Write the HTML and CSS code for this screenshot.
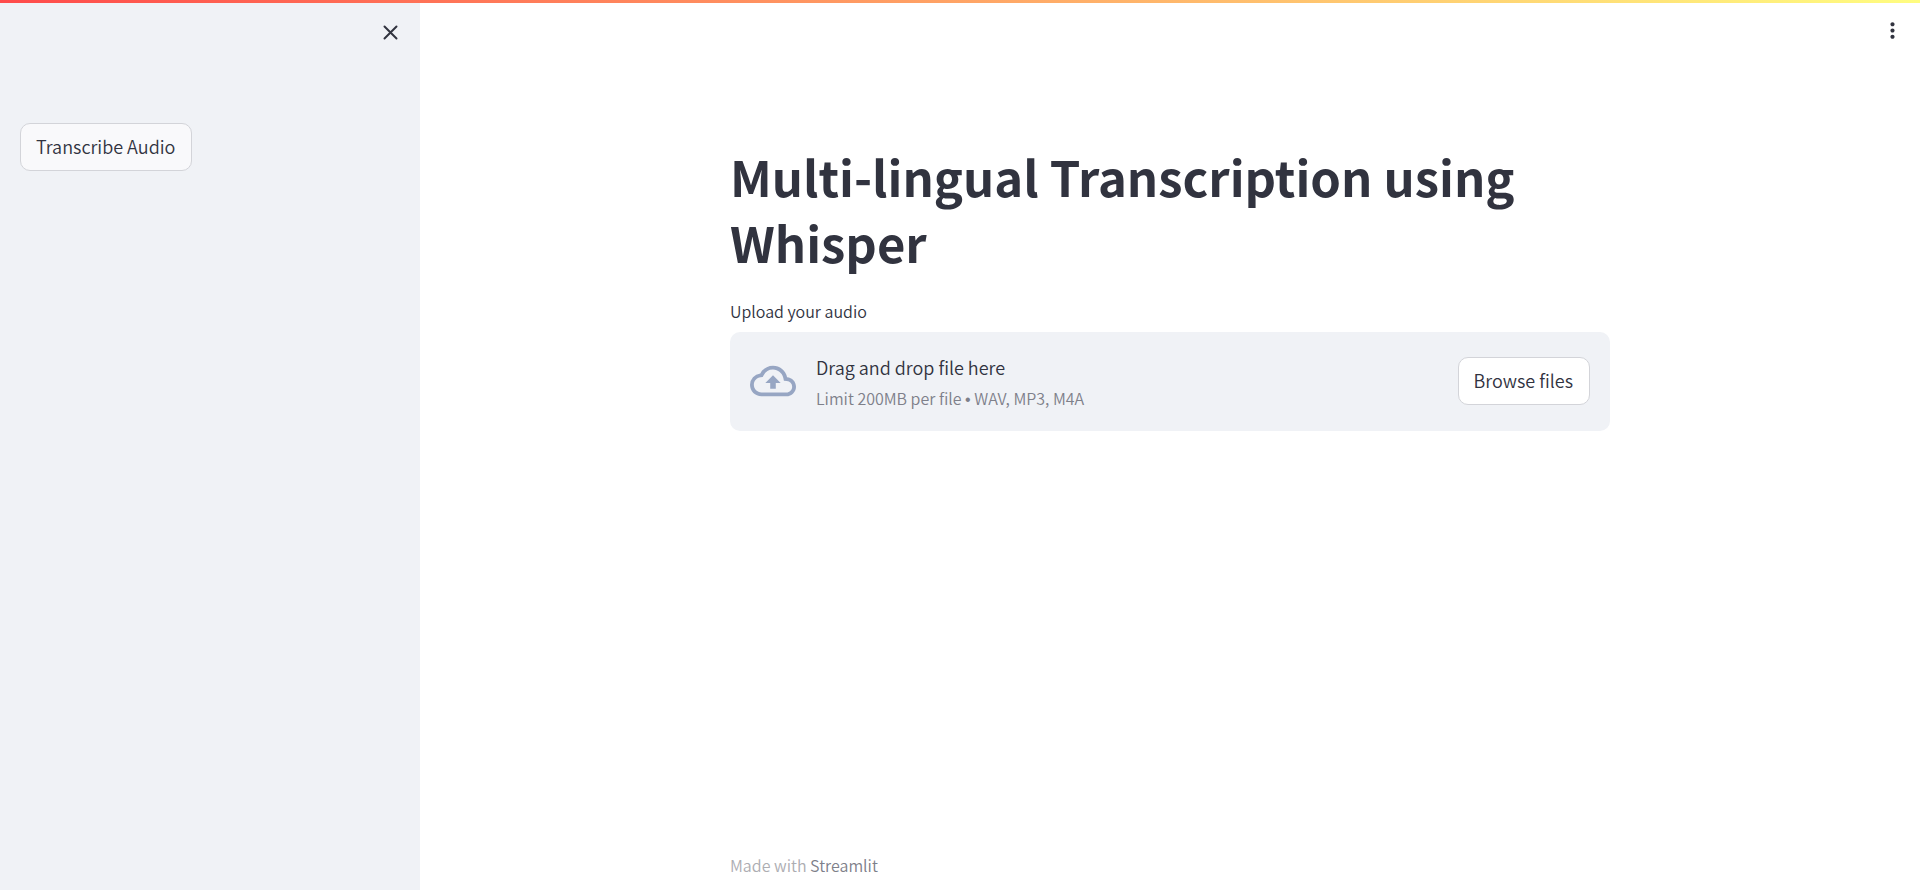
FILE: index.html
```html
<!DOCTYPE html>
<html lang="en">
<head>
<meta charset="utf-8">
<meta name="viewport" content="width=device-width, initial-scale=1">
<title>Multi-lingual Transcription using Whisper</title>
<link rel="stylesheet" href="styles.css">
</head>
<body>
<div class="decoration"></div>
<div class="app">
  <aside class="sidebar">
    <div class="sidebar-header">
      <button class="icon-button" type="button" aria-label="Close sidebar">
        <svg class="close-icon" viewBox="0 0 15 15" aria-hidden="true"><path d="M1.500 1.500L13.500 13.500M13.500 1.500L1.500 13.500" fill="none" stroke="currentColor" stroke-width="2" stroke-linecap="round"/></svg>
      </button>
    </div>
    <div class="sidebar-content">
      <button class="button button-sidebar" type="button">Transcribe Audio</button>
    </div>
  </aside>
  <div class="view">
    <header class="toolbar">
      <button class="icon-button" type="button" aria-label="Main menu">
        <svg class="menu-icon" viewBox="0 0 24 24" aria-hidden="true"><path fill="currentColor" d="M12 8c1.100 0 2-.9 2-2s-.9-2-2-2-2 .9-2 2 .9 2 2 2zm0 2c-1.100 0-2 .9-2 2s.9 2 2 2 2-.9 2-2-.9-2-2-2zm0 6c-1.100 0-2 .9-2 2s.9 2 2 2 2-.9 2-2-.9-2-2-2z"/></svg>
      </button>
    </header>
    <main class="content">
      <h1 class="title">Multi-lingual Transcription using Whisper</h1>
      <div class="uploader">
        <label class="uploader-label" for="audio-file">Upload your audio</label>
        <input id="audio-file" type="file" accept=".wav,.mp3,.m4a" hidden>
        <section class="dropzone">
          <svg class="cloud-icon" viewBox="0 0 24 24" aria-hidden="true"><path fill="currentColor" d="M19.350 10.040A7.490 7.490 0 0 0 12 4C9.110 4 6.600 5.640 5.350 8.040A5.994 5.994 0 0 0 0 14c0 3.310 2.690 6 6 6h13c2.760 0 5-2.240 5-5 0-2.640-2.050-4.780-4.650-4.960zM19 18H6c-2.210 0-4-1.790-4-4 0-2.050 1.530-3.760 3.560-3.970l1.070-.11.500-.95A5.469 5.469 0 0 1 12 6c2.620 0 4.880 1.860 5.390 4.430l.300 1.500 1.530.110A2.980 2.980 0 0 1 22 15c0 1.650-1.350 3-3 3zM8 13h2.550v3h2.900v-3H16l-4-4z"/></svg>
          <div class="instructions">
            <span class="instruction">Drag and drop file here</span>
            <span class="limit">Limit 200MB per file <span class="bullet">•</span> WAV, MP3, M4A</span>
          </div>
          <button class="button" type="button">Browse files</button>
        </section>
      </div>
    </main>
    <footer class="footer">Made with <a class="footer-link" href="#">Streamlit</a></footer>
  </div>
</div>
</body>
</html>
```
FILE: styles.css
```css
* {
  box-sizing: border-box;
}

body {
  margin: 0;
  background: #fff;
  color: #31333f;
  font-family: "Noto Sans CJK SC", "Noto Sans", sans-serif;
  font-size: 18px;
  font-weight: 350;
  line-height: 32px;
}

.decoration {
  position: fixed;
  top: 0;
  left: 0;
  right: 0;
  height: 3px;
  background: linear-gradient(90deg, #ff4b4b, #fffd80);
  z-index: 1;
}

.app {
  display: flex;
  min-height: 100vh;
}

.sidebar {
  flex: 0 0 420px;
  background: #f0f2f6;
}

.sidebar-header {
  display: flex;
  justify-content: flex-end;
  padding: 20px 17px 0 0;
}

.sidebar-content {
  padding: 78px 20px 20px;
}

.icon-button {
  display: flex;
  padding: 5px;
  border: 0;
  background: transparent;
  color: inherit;
  cursor: pointer;
}

.close-icon {
  width: 15px;
  height: 15px;
}

.menu-icon {
  width: 25px;
  height: 25px;
}

.view {
  flex: 1;
  min-width: 0;
  display: flex;
  flex-direction: column;
}

.toolbar {
  display: flex;
  justify-content: flex-end;
  padding: 13px 10px 0 0;
}

.content,
.footer {
  width: 100%;
  max-width: 920px;
  margin: 0 auto;
  padding: 0 20px;
}

.content {
  flex: 1;
  padding-top: 95px;
}

.title {
  margin: 0;
  font-size: 49px;
  font-weight: 700;
  line-height: 66px;
}

.uploader {
  margin-top: 21px;
}

.uploader-label {
  display: block;
  margin-bottom: 6px;
  font-size: 16px;
  line-height: 30px;
}

.dropzone {
  display: flex;
  align-items: center;
  gap: 20px;
  padding: 20px 20px 21px;
  border-radius: 10px;
  background: #f0f2f6;
}

.cloud-icon {
  flex: none;
  width: 46px;
  height: 46px;
  color: #97a6c3;
}

.instructions {
  flex: 1;
  display: flex;
  flex-direction: column;
  gap: 4px;
}

.instruction {
  line-height: 30px;
}

.limit {
  color: #7e808a;
  font-size: 16px;
  line-height: 24px;
}

.bullet {
  font-family: "Liberation Sans", sans-serif;
  line-height: 1;
}

.button {
  padding: 6px 16px 8px 15px;
  border: 1px solid #d3d4d9;
  border-radius: 10px;
  background: #fff;
  color: inherit;
  font: inherit;
  cursor: pointer;
}

.button-sidebar {
  background: #f9f9fb;
}

.footer {
  padding-bottom: 9px;
  color: #adadb2;
  font-size: 16px;
}

.footer-link {
  color: #7e808a;
  text-decoration: none;
}
```
